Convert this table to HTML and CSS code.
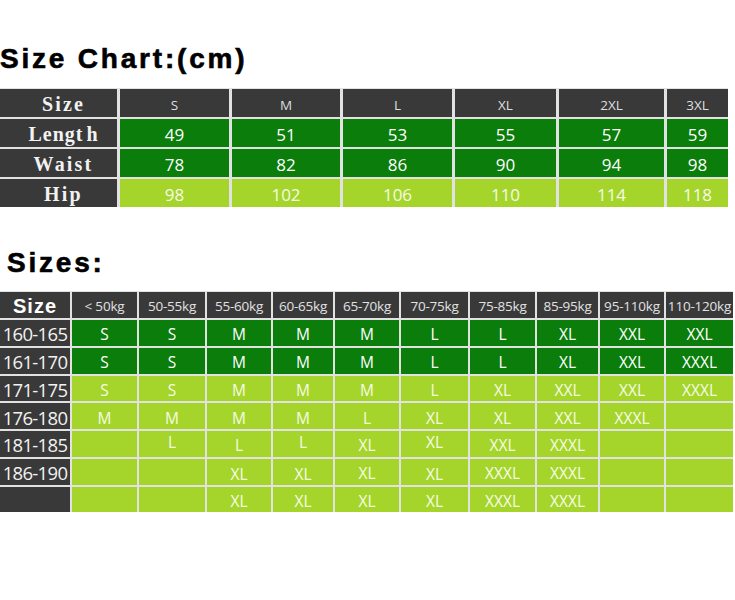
FILE: index.html
```html
<!DOCTYPE html>
<html lang="en">
<head>
<meta charset="utf-8">
<title>Size Chart</title>
<link rel="stylesheet" href="styles.css">
</head>
<body>
  <h1 class="title title-chart">Size Chart:(cm)</h1>
  <div class="chart">
    <div class="cell dark label">Size</div>
    <div class="cell dark head">S</div>
    <div class="cell dark head">M</div>
    <div class="cell dark head">L</div>
    <div class="cell dark head">XL</div>
    <div class="cell dark head">2XL</div>
    <div class="cell dark head">3XL</div>

    <div class="cell dark label label-length">Lengt h</div>
    <div class="cell green num">49</div>
    <div class="cell green num">51</div>
    <div class="cell green num">53</div>
    <div class="cell green num">55</div>
    <div class="cell green num">57</div>
    <div class="cell green num">59</div>

    <div class="cell dark label">Waist</div>
    <div class="cell green num">78</div>
    <div class="cell green num">82</div>
    <div class="cell green num">86</div>
    <div class="cell green num">90</div>
    <div class="cell green num">94</div>
    <div class="cell green num">98</div>

    <div class="cell dark label">Hip</div>
    <div class="cell lime num">98</div>
    <div class="cell lime num">102</div>
    <div class="cell lime num">106</div>
    <div class="cell lime num">110</div>
    <div class="cell lime num">114</div>
    <div class="cell lime num">118</div>
  </div>

  <h2 class="title title-sizes">Sizes:</h2>
  <div class="sizes">
    <div class="cell dark size-head">Size</div>
    <div class="cell dark kg">&lt; 50kg</div>
    <div class="cell dark kg">50-55kg</div>
    <div class="cell dark kg">55-60kg</div>
    <div class="cell dark kg">60-65kg</div>
    <div class="cell dark kg">65-70kg</div>
    <div class="cell dark kg">70-75kg</div>
    <div class="cell dark kg">75-85kg</div>
    <div class="cell dark kg">85-95kg</div>
    <div class="cell dark kg">95-110kg</div>
    <div class="cell dark kg">110-120kg</div>

    <div class="cell dark height">160-165</div>
    <div class="cell green val">S</div>
    <div class="cell green val">S</div>
    <div class="cell green val">M</div>
    <div class="cell green val">M</div>
    <div class="cell green val">M</div>
    <div class="cell green val">L</div>
    <div class="cell green val">L</div>
    <div class="cell green val">XL</div>
    <div class="cell green val">XXL</div>
    <div class="cell green val">XXL</div>

    <div class="cell dark height">161-170</div>
    <div class="cell green val">S</div>
    <div class="cell green val">S</div>
    <div class="cell green val">M</div>
    <div class="cell green val">M</div>
    <div class="cell green val">M</div>
    <div class="cell green val">L</div>
    <div class="cell green val">L</div>
    <div class="cell green val">XL</div>
    <div class="cell green val">XXL</div>
    <div class="cell green val">XXXL</div>

    <div class="cell dark height">171-175</div>
    <div class="cell lime val">S</div>
    <div class="cell lime val">S</div>
    <div class="cell lime val">M</div>
    <div class="cell lime val">M</div>
    <div class="cell lime val">M</div>
    <div class="cell lime val">L</div>
    <div class="cell lime val">XL</div>
    <div class="cell lime val">XXL</div>
    <div class="cell lime val">XXL</div>
    <div class="cell lime val">XXXL</div>

    <div class="cell dark height">176-180</div>
    <div class="cell lime val">M</div>
    <div class="cell lime val">M</div>
    <div class="cell lime val">M</div>
    <div class="cell lime val">M</div>
    <div class="cell lime val">L</div>
    <div class="cell lime val">XL</div>
    <div class="cell lime val">XL</div>
    <div class="cell lime val">XXL</div>
    <div class="cell lime val">XXXL</div>
    <div class="cell lime val"></div>

    <div class="cell dark height">181-185</div>
    <div class="cell lime val"></div>
    <div class="cell lime val up">L</div>
    <div class="cell lime val">L</div>
    <div class="cell lime val up">L</div>
    <div class="cell lime val">XL</div>
    <div class="cell lime val up">XL</div>
    <div class="cell lime val">XXL</div>
    <div class="cell lime val">XXXL</div>
    <div class="cell lime val"></div>
    <div class="cell lime val"></div>

    <div class="cell dark height">186-190</div>
    <div class="cell lime val"></div>
    <div class="cell lime val"></div>
    <div class="cell lime val down">XL</div>
    <div class="cell lime val down">XL</div>
    <div class="cell lime val">XL</div>
    <div class="cell lime val down">XL</div>
    <div class="cell lime val">XXXL</div>
    <div class="cell lime val">XXXL</div>
    <div class="cell lime val"></div>
    <div class="cell lime val"></div>

    <div class="cell dark height"></div>
    <div class="cell lime val"></div>
    <div class="cell lime val"></div>
    <div class="cell lime val">XL</div>
    <div class="cell lime val down">XL</div>
    <div class="cell lime val">XL</div>
    <div class="cell lime val">XL</div>
    <div class="cell lime val">XXXL</div>
    <div class="cell lime val">XXXL</div>
    <div class="cell lime val"></div>
    <div class="cell lime val"></div>
  </div>
</body>
</html>
```

FILE: styles.css
```css
html, body {
  margin: 0;
  padding: 0;
  background: #ffffff;
}

body {
  font-family: "Open Sans", "Noto Sans", "Liberation Sans", sans-serif;
  width: 735px;
}

.title {
  font-family: "Liberation Sans", Arial, sans-serif;
  font-weight: 700;
  font-size: 28px;
  line-height: 31px;
  height: 31px;
  letter-spacing: 2.8px;
  color: #000;
  margin: 0;
  -webkit-text-stroke: 0.6px #000;
}

.title-chart {
  margin-top: 43px;
}

.title-sizes {
  margin-top: 40px;
  margin-left: 7px;
}

.cell {
  display: flex;
  align-items: center;
  justify-content: center;
  overflow: hidden;
  white-space: nowrap;
  box-sizing: border-box;
}

.dark {
  background: #393939;
  color: #e4e4e4;
}

.green {
  background: #0a7d0b;
  color: #ffffff;
}

.lime {
  background: #a5d52b;
  color: #f6fbe6;
}

/* ---------- Size chart (cm) ---------- */
.chart {
  margin-top: 14px;
  width: 728px;
  display: grid;
  grid-template-columns: 117px 109px 108px 109px 101px 105px 61px;
  grid-template-rows: repeat(4, 28px);
  column-gap: 3px;
  row-gap: 2px;
  padding-top: 1px;
  background: #e2e2e2;
}

.chart .label {
  font-family: "Liberation Serif", "Times New Roman", serif;
  font-weight: 700;
  font-size: 20px;
  letter-spacing: 2.2px;
  color: #f2f2f2;
  padding-left: 10px;
  padding-top: 2px;
}

.chart .label-length {
  letter-spacing: 1px;
  word-spacing: -3px;
}

.chart .head {
  font-size: 13.5px;
  padding-top: 3px;
  color: #dedede;
}

.chart .num {
  font-size: 17px;
  padding-top: 3px;
}

/* ---------- Sizes by height / weight ---------- */
.sizes {
  margin-top: 13px;
  width: 733px;
  display: grid;
  grid-template-columns: 70px 65px 66px 64px 60px 64px 67px 65px 61px 64px 67px;
  grid-template-rows: 26px repeat(7, 25.75px);
  gap: 2px;
  padding-top: 1px;
  background: #e2e2e2;
}

.sizes .size-head {
  font-family: "Liberation Sans", Arial, sans-serif;
  font-weight: 700;
  font-size: 20px;
  letter-spacing: 1px;
  color: #ffffff;
  padding-top: 2px;
}

.sizes .kg {
  font-size: 13.5px;
  color: #e2e2e2;
  padding-top: 2px;
  letter-spacing: -0.2px;
}

.sizes .height {
  font-size: 18.5px;
  letter-spacing: -0.7px;
  color: #f2f2f2;
  padding-top: 2px;
}

.sizes .val {
  font-size: 15.5px;
  line-height: 18px;
  padding-top: 3px;
}

.sizes .up {
  padding-top: 0;
  padding-bottom: 3px;
}

.sizes .down {
  padding-top: 5px;
  line-height: 17px;
}
```
